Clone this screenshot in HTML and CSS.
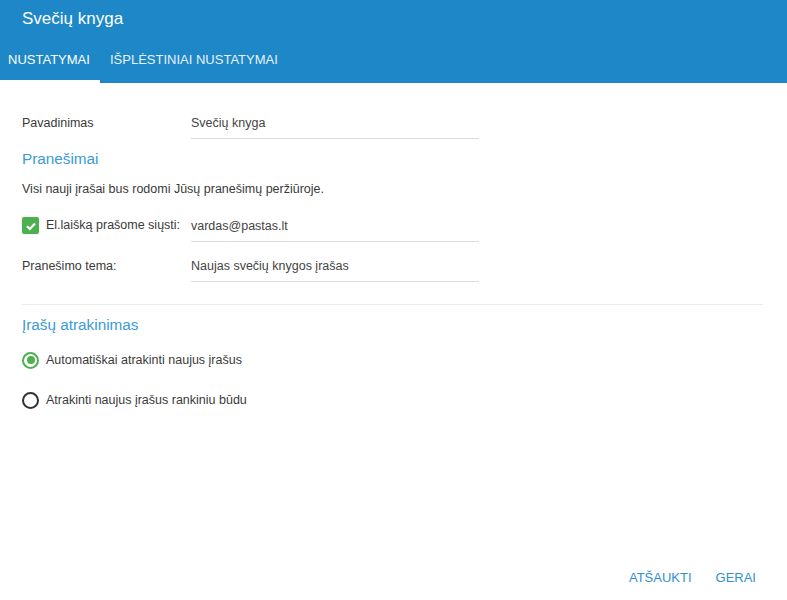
FILE: index.html
```html
<!DOCTYPE html>
<html lang="lt">
<head>
<meta charset="utf-8">
<link rel="stylesheet" href="styles.css">
</head>
<body>
<div class="dialog">
  <header class="header">
    <div class="title">Svečių knyga</div>
    <nav class="tabs">
      <div class="tab active">NUSTATYMAI</div>
      <div class="tab">IŠPLĖSTINIAI NUSTATYMAI</div>
    </nav>
  </header>
  <main class="content">
    <div class="row first">
      <div class="label">Pavadinimas</div>
      <div class="field">Svečių knyga</div>
    </div>
    <h2 class="section">Pranešimai</h2>
    <p class="note">Visi nauji įrašai bus rodomi Jūsų pranešimų peržiūroje.</p>
    <div class="row">
      <div class="label check-label">
        <span class="checkbox"><svg width="12" height="12" viewBox="0 0 12 12"><path d="M2 6.2 L4.8 9 L10 3.4" fill="none" stroke="#fff" stroke-width="2.2"/></svg></span>
        El.laišką prašome siųsti:
      </div>
      <div class="field">vardas@pastas.lt</div>
    </div>
    <div class="row">
      <div class="label">Pranešimo tema:</div>
      <div class="field">Naujas svečių knygos įrašas</div>
    </div>
    <hr class="divider">
    <h2 class="section second">Įrašų atrakinimas</h2>
    <div class="radio-row top"><span class="radio checked"></span>Automatiškai atrakinti naujus įrašus</div>
    <div class="radio-row"><span class="radio"></span>Atrakinti naujus įrašus rankiniu būdu</div>
  </main>
  <footer class="actions">
    <button class="btn">ATŠAUKTI</button>
    <button class="btn">GERAI</button>
  </footer>
</div>
</body>
</html>
```
FILE: styles.css
```css
* { box-sizing: border-box; }
html, body { margin: 0; padding: 0; background: #fff; }
body { font-family: "Liberation Sans", Arial, sans-serif; color: #3a3a3a; }
.dialog { width: 787px; height: 600px; display: flex; flex-direction: column; }
.header { background: #1d87c8; color: #fff; height: 83px; display: flex; flex-direction: column; }
.title { font-size: 17px; padding: 9px 0 0 22px; height: 38px; }
.tabs { display: flex; height: 45px; }
.tab { font-size: 13px; padding: 14px 8px 0; height: 45px; color: #e8f2fa; white-space: nowrap; }
.tab.active { color: #fff; border-bottom: 3px solid #fff; width: 100px; margin-right: 2px; }
.content { flex: 1; padding: 0 24px 0 22px; font-size: 12.5px; }
.row { display: flex; align-items: flex-start; height: 40px; }
.row.first { margin-top: 23px; height: 32px; }
.label { width: 169px; padding-top: 10px; line-height: 15px; color: #3a3a3a; }
.check-label { display: flex; align-items: center; padding-top: 8px; white-space: nowrap; }
.field { width: 288px; line-height: 15px; padding: 10px 0 0 0; height: 33px; border-bottom: 1px solid #dcdcdc; color: #444; }
.checkbox { width: 17px; height: 17px; border-radius: 2px; background: #4caf50; display: inline-flex; align-items: center; justify-content: center; margin-right: 7px; }
.section { font-size: 15.3px; font-weight: normal; color: #3b9ad9; margin: 12px 0 0; line-height: 18px; }
.section.second { margin-top: 11px; }
.note { margin: 14px 0 12px; line-height: 15px; }
.divider { border: 0; border-top: 1px solid #ececec; margin: 15px 0 0; }
.radio-row { display: flex; align-items: center; height: 40px; }
.radio-row.top { margin-top: 6px; }
.radio { width: 17px; height: 17px; border-radius: 50%; border: 2px solid #333; margin-right: 7px; display: inline-block; position: relative; }
.radio.checked { border-color: #4caf50; }
.radio.checked::after { content: ""; position: absolute; left: 2.5px; top: 2.5px; width: 8px; height: 8px; border-radius: 50%; background: #4caf50; }
.actions { display: flex; justify-content: flex-end; padding: 0 23px 10px 0; }
.btn { background: none; border: 0; font-family: inherit; font-size: 13px; color: #2f8fd2; padding: 5px 8px; margin-left: 8px; }
```
